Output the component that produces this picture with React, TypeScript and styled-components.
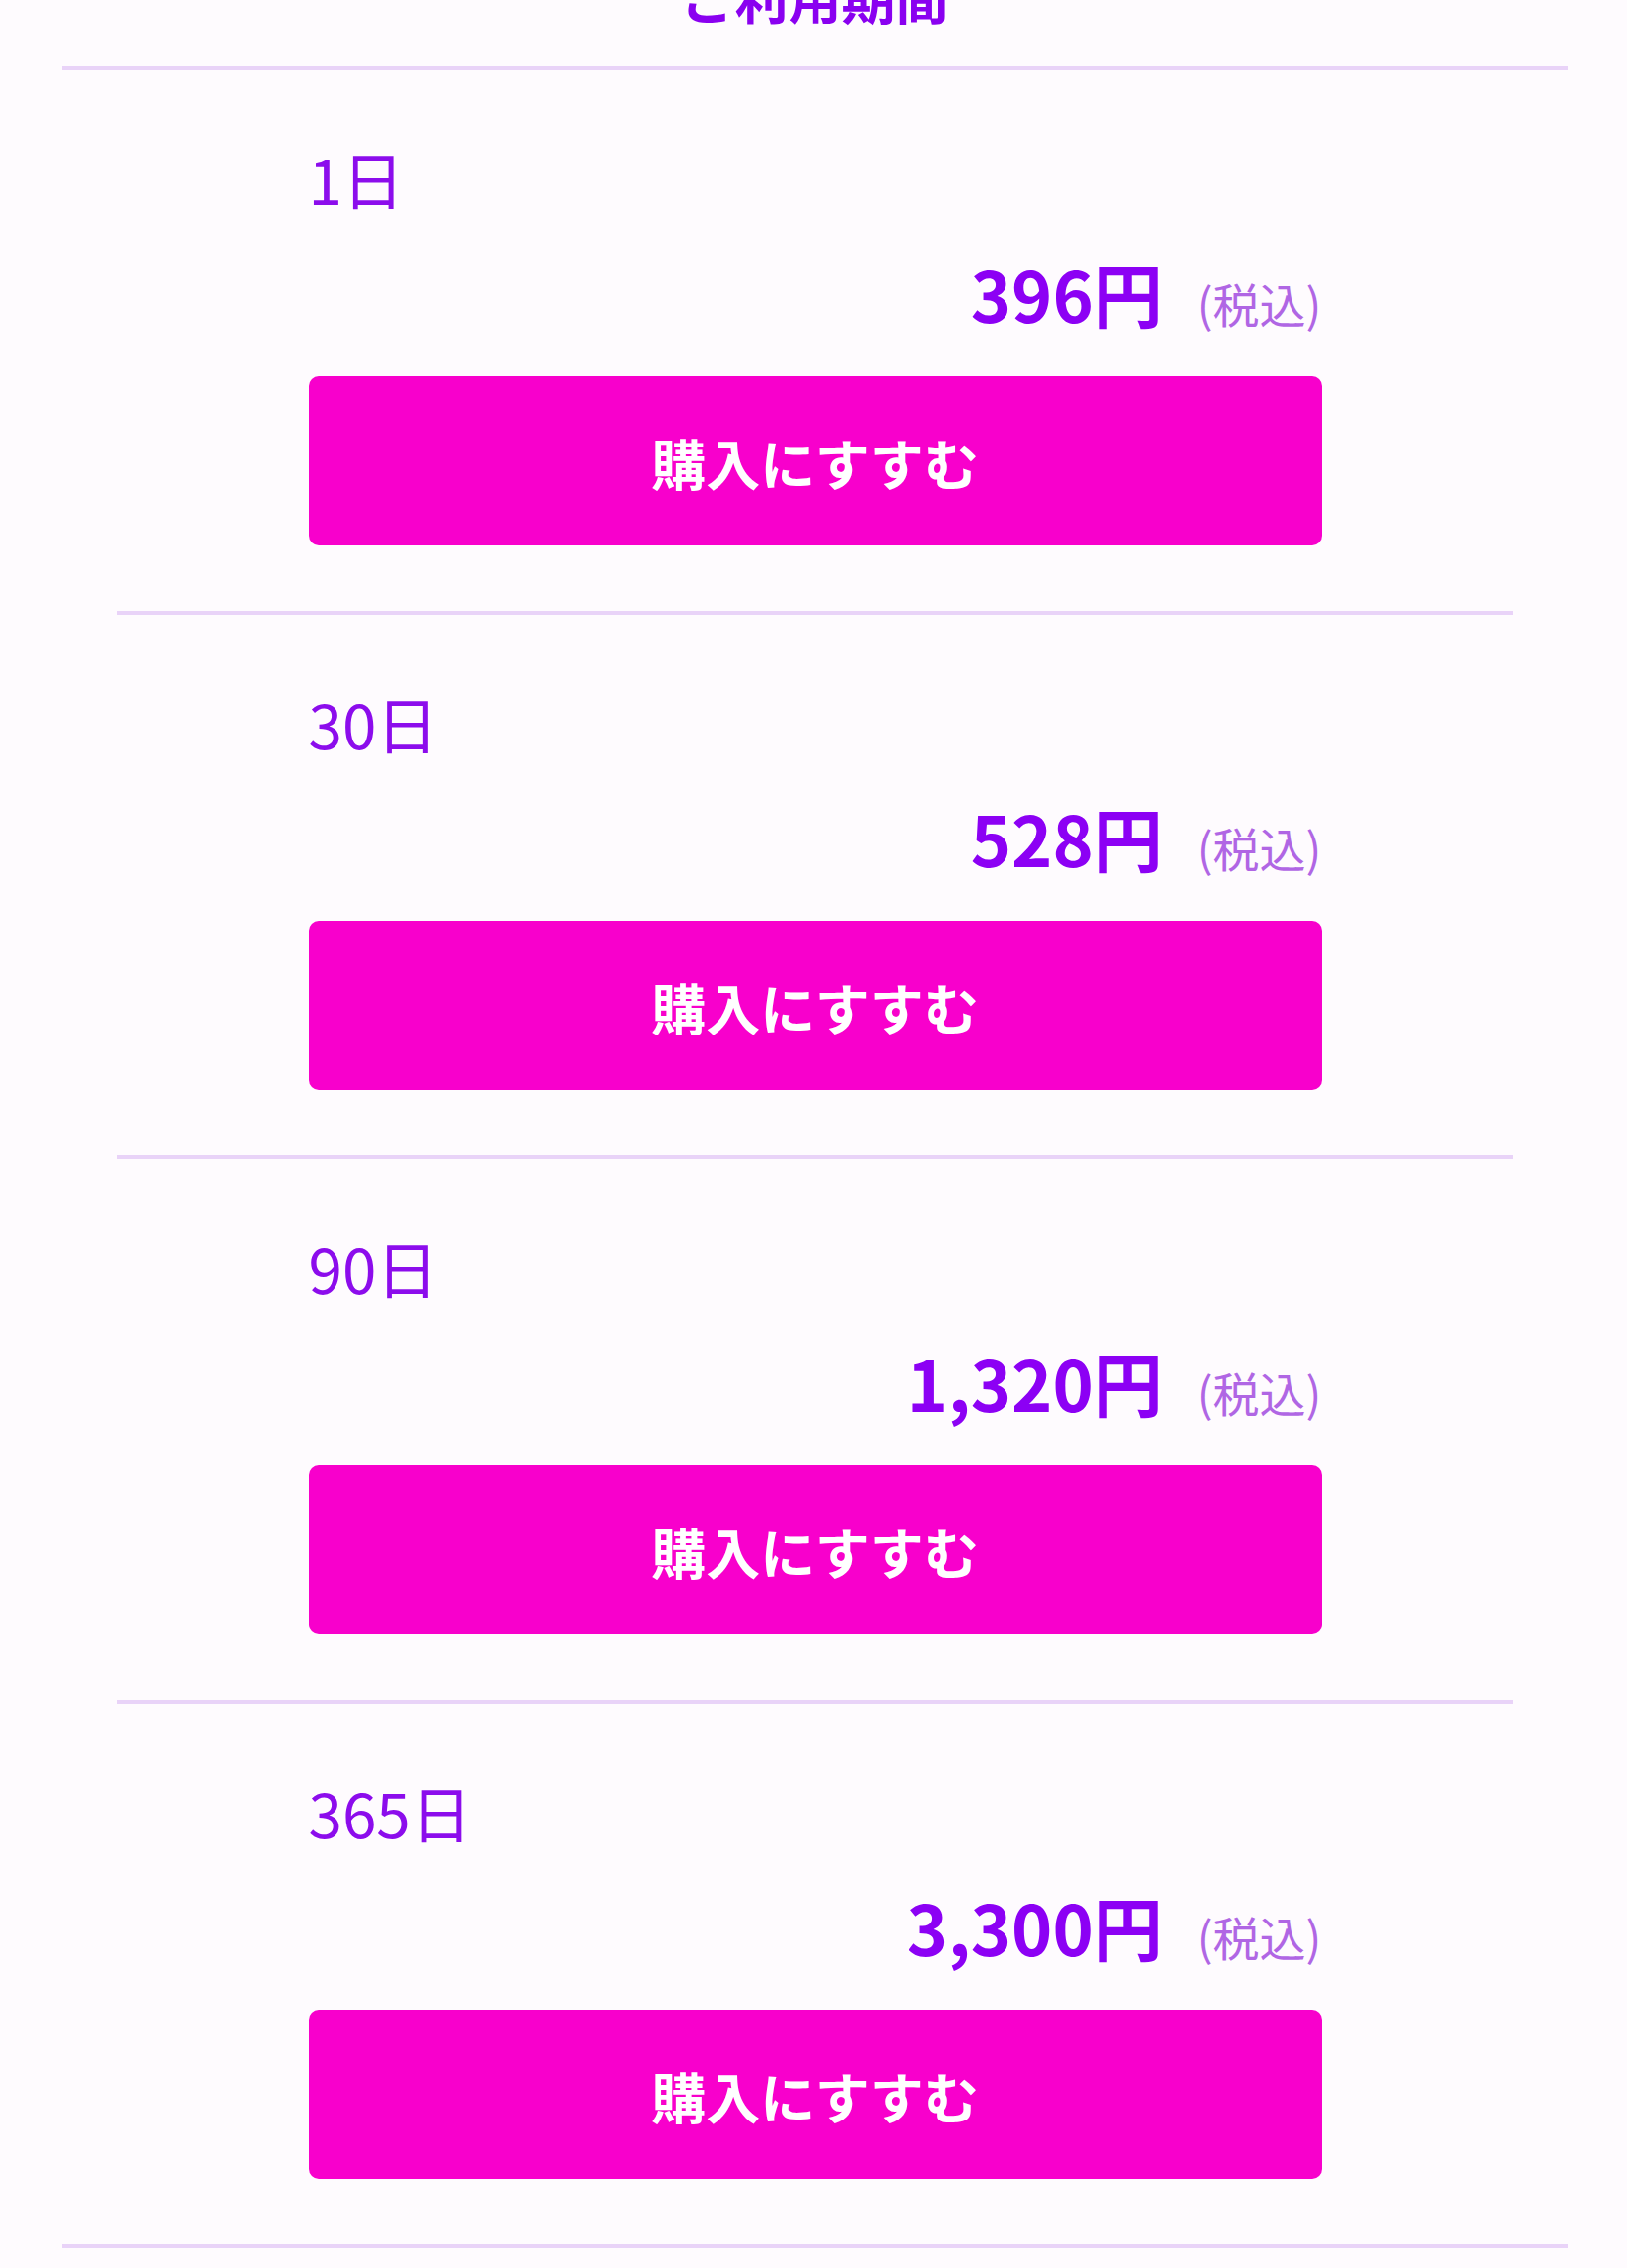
import styled, { createGlobalStyle } from "styled-components";

const GlobalStyle = createGlobalStyle`
    body {
        margin: 0;
        background: #fefbfe;
        font-family: "Noto Sans CJK JP", "Noto Sans", sans-serif;
    }
`;

const Page = styled.div`
    padding: 0 60px 40px 63px;
`;

const Heading = styled.h2`
    margin: -30px 0 43px;
    text-align: center;
    font-size: 54px;
    line-height: 1;
    font-weight: 700;
    color: #8a00f0;
`;

const PlanList = styled.ul`
    list-style: none;
    margin: 0;
    padding: 0;
    border-top: 4px solid #e9d3f8;
    border-bottom: 4px solid #e9d3f8;
`;

const Plan = styled.li`
    margin: 0 55px;
    padding: 78px 0 66px;
    border-bottom: 4px solid #e9d3f8;
    &:last-child {
        border-bottom: none;
    }
`;

const Inner = styled.div`
    width: 1024px;
    margin: 0 auto;
    display: flex;
    flex-direction: column;
`;

const Period = styled.div`
    font-size: 62px;
    line-height: 1;
    color: #8c0cec;
`;

const PriceRow = styled.div`
    margin-top: 50px;
    display: flex;
    justify-content: flex-end;
    align-items: baseline;
    gap: 35px;
`;

const Price = styled.span`
    font-size: 70px;
    line-height: 1;
    font-weight: 700;
    color: #8c00f4;
`;

const Tax = styled.span`
    font-size: 47px;
    line-height: 1;
    color: #b066e4;
`;

const BuyButton = styled.button`
    margin-top: 49px;
    height: 171px;
    border: none;
    border-radius: 10px;
    background: #f800cc;
    color: #ffffff;
    font-family: inherit;
    font-size: 55px;
    font-weight: 700;
    cursor: pointer;
`;

interface PlanItem {
    days: number;
    price: string;
}

const plans: PlanItem[] = [
    { days: 1, price: "396" },
    { days: 30, price: "528" },
    { days: 90, price: "1,320" },
    { days: 365, price: "3,300" },
];

function App() {
    return (
        <Page>
            <GlobalStyle />
            <Heading>ご利用期間</Heading>
            <PlanList>
                {plans.map((plan) => (
                    <Plan key={plan.days}>
                        <Inner>
                            <Period>{plan.days}日</Period>
                            <PriceRow>
                                <Price>{plan.price}円</Price>
                                <Tax>(税込)</Tax>
                            </PriceRow>
                            <BuyButton>購入にすすむ</BuyButton>
                        </Inner>
                    </Plan>
                ))}
            </PlanList>
        </Page>
    );
}

export default App;
